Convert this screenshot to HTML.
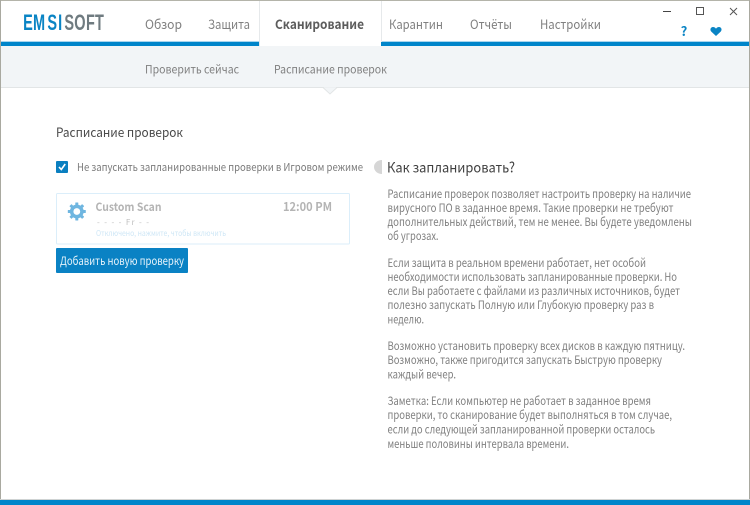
<!DOCTYPE html>
<html lang="ru">
<head>
<meta charset="utf-8">
<title>Emsisoft</title>
<style>
html,body{margin:0;padding:0;background:#fff;width:750px;height:505px;overflow:hidden}
svg{display:block}
text{font-family:"Noto Sans CJK SC","Liberation Sans",sans-serif;filter:blur(.35px)}
.b text{font-size:11.6px;fill:#808080}
</style>
</head>
<body>
<svg width="750" height="505" viewBox="0 0 750 505" xmlns="http://www.w3.org/2000/svg">
<rect width="750" height="505" fill="#fff"/>
<!-- window border -->
<rect x="0" y="0" width="750" height="1" fill="#b4b4aa"/>
<rect x="0" y="0" width="1" height="500" fill="#a9a9a0"/>
<rect x="749" y="0" width="1" height="500" fill="#a9a9a0"/>
<!-- top bar -->
<rect x="1" y="41" width="258" height="1" fill="#a8d5ee"/>
<rect x="1" y="42" width="258" height="4" fill="#0085ca"/>
<rect x="381" y="41" width="368" height="1" fill="#a8d5ee"/>
<rect x="381" y="42" width="368" height="4" fill="#0085ca"/>
<rect x="259" y="1" width="1" height="45" fill="#e6e9eb"/>
<rect x="381" y="1" width="1" height="41" fill="#e6e9eb"/>
<!-- logo -->
<g transform="scale(.66 1)" font-size="22" font-weight="700">
<text y="30" x="35 50 71.700 88" fill="#0a84c4" style="font-family:'Liberation Sans',sans-serif">EMSI</text>
<text y="30" x="97.500 112.600 130.300 144" fill="#6f7b80" style="font-family:'Liberation Sans',sans-serif">SOFT</text>
</g>
<!-- nav -->
<g font-size="13" fill="#808080">
<text x="145" y="29" textLength="37" lengthAdjust="spacingAndGlyphs">Обзор</text>
<text x="208" y="29" textLength="42" lengthAdjust="spacingAndGlyphs">Защита</text>
<text x="275" y="29" textLength="89" lengthAdjust="spacingAndGlyphs" font-weight="700" fill="#5c5c5c">Сканирование</text>
<text x="389" y="29" textLength="54" lengthAdjust="spacingAndGlyphs">Карантин</text>
<text x="470" y="29" textLength="42" lengthAdjust="spacingAndGlyphs">Отчёты</text>
<text x="540" y="29" textLength="61" lengthAdjust="spacingAndGlyphs">Настройки</text>
</g>
<!-- window controls -->
<rect x="663" y="11" width="8" height="1" fill="#444"/>
<rect x="696.500" y="7.500" width="7" height="7" fill="none" stroke="#555" stroke-width="1"/>
<path d="M730 8L737 15M737 8L730 15" stroke="#555" stroke-width="1" fill="none"/>
<text x="684" y="36" font-size="13" font-weight="700" fill="#0a84c4" text-anchor="middle">?</text>
<path d="M716 36L711.300 31.600C709.600 29.800 710.600 27 713 27C714.400 27 715.400 27.700 716 28.700C716.600 27.700 717.600 27 719 27C721.400 27 722.400 29.800 720.700 31.600Z" fill="#0a84c4"/>
<!-- subnav -->
<rect x="1" y="46" width="748" height="41" fill="#f2f5f7"/>
<rect x="1" y="87" width="748" height="1" fill="#e2e5e6"/>
<path d="M323 87.500L330 94L337 87.500" fill="#f2f5f7" stroke="#e2e5e6" stroke-width="1"/>
<rect x="324" y="86" width="12" height="1.200" fill="#f2f5f7"/>
<g font-size="11.500" fill="#808080">
<text x="145" y="73.500" textLength="94" lengthAdjust="spacingAndGlyphs">Проверить сейчас</text>
<text x="274" y="73.500" textLength="113" lengthAdjust="spacingAndGlyphs">Расписание проверок</text>
</g>
<!-- left column -->
<text x="56" y="137" font-size="12.500" fill="#4a4a4a" textLength="127" lengthAdjust="spacingAndGlyphs">Расписание проверок</text>
<rect x="56" y="161" width="12" height="12" rx="1" fill="#0a7fc0"/>
<path d="M59 167L61.300 169.500L65.200 164" stroke="#fff" stroke-width="1.600" fill="none"/>
<text x="77" y="171" font-size="11" fill="#7b7b7b" textLength="286" lengthAdjust="spacingAndGlyphs">Не запускать запланированные проверки в Игровом режиме</text>
<path d="M382 160A8 7 0 0 0 382 174Z" fill="#d6d6d6"/>
<!-- card -->
<rect x="56.500" y="193.500" width="293" height="50.500" rx="1" fill="#fff" stroke="#dbeefa" stroke-width="1"/>
<g transform="translate(76.800 211.500)" fill="#6fb6e0">
<circle r="5.300" fill="none" stroke="#6fb6e0" stroke-width="3.200"/>
<rect x="-1.500" y="-9" width="3" height="18" rx=".4"/>
<rect x="-1.500" y="-9" width="3" height="18" rx=".4" transform="rotate(45)"/>
<rect x="-1.500" y="-9" width="3" height="18" rx=".4" transform="rotate(90)"/>
<rect x="-1.500" y="-9" width="3" height="18" rx=".4" transform="rotate(135)"/>
<circle r="3.400" fill="#fff"/>
</g>
<text x="95.500" y="211" font-size="11.500" font-weight="700" fill="#b4b4b4" textLength="66" lengthAdjust="spacingAndGlyphs">Custom Scan</text>
<text x="283" y="211" font-size="12" font-weight="700" fill="#b4b4b4" textLength="49" lengthAdjust="spacingAndGlyphs">12:00 PM</text>
<text x="97" y="225" font-size="8" fill="#c0c0c0" textLength="52" lengthAdjust="spacing" xml:space="preserve">- - - - Fr - -</text>
<text x="96" y="236" font-size="8" fill="#cfe7f6" textLength="130" lengthAdjust="spacingAndGlyphs">Отключено, нажмите, чтобы включить</text>
<!-- button -->
<rect x="56" y="248" width="132" height="25" rx="1" fill="#0a82c4"/>
<text x="60" y="265" font-size="11.500" fill="#e6f3fa" textLength="124" lengthAdjust="spacingAndGlyphs">Добавить новую проверку</text>
<!-- right column -->
<text x="387" y="172.500" font-size="14" fill="#404040" textLength="128" lengthAdjust="spacingAndGlyphs">Как запланировать?</text>
<g class="b">
<text x="387.500" y="198" textLength="303.500" lengthAdjust="spacingAndGlyphs">Расписание проверок позволяет настроить проверку на наличие</text>
<text x="387.500" y="212" textLength="286" lengthAdjust="spacingAndGlyphs">вирусного ПО в заданное время. Такие проверки не требуют</text>
<text x="387.500" y="226" textLength="304.500" lengthAdjust="spacingAndGlyphs">дополнительных действий, тем не менее. Вы будете уведомлены</text>
<text x="387.500" y="240" textLength="51" lengthAdjust="spacingAndGlyphs">об угрозах.</text>
<text x="387.500" y="267" textLength="258.500" lengthAdjust="spacingAndGlyphs">Если защита в реальном времени работает, нет особой</text>
<text x="387.500" y="281" textLength="289.500" lengthAdjust="spacingAndGlyphs">необходимости использовать запланированные проверки. Но</text>
<text x="387.500" y="295" textLength="292.500" lengthAdjust="spacingAndGlyphs">если Вы работаете с файлами из различных источников, будет</text>
<text x="387.500" y="309" textLength="266.500" lengthAdjust="spacingAndGlyphs">полезно запускать Полную или Глубокую проверку раз в</text>
<text x="387.500" y="323.500" textLength="36.500" lengthAdjust="spacingAndGlyphs">неделю.</text>
<text x="387.500" y="350" textLength="297.500" lengthAdjust="spacingAndGlyphs">Возможно установить проверку всех дисков в каждую пятницу.</text>
<text x="387.500" y="364" textLength="274.500" lengthAdjust="spacingAndGlyphs">Возможно, также пригодится запускать Быструю проверку</text>
<text x="387.500" y="378.500" textLength="68.500" lengthAdjust="spacingAndGlyphs">каждый вечер.</text>
<text x="387.500" y="405" textLength="263.500" lengthAdjust="spacingAndGlyphs">Заметка: Если компьютер не работает в заданное время</text>
<text x="387.500" y="419" textLength="284.500" lengthAdjust="spacingAndGlyphs">проверки, то сканирование будет выполняться в том случае,</text>
<text x="387.500" y="433.500" textLength="267.500" lengthAdjust="spacingAndGlyphs">если до следующей запланированной проверки осталось</text>
<text x="387.500" y="448" textLength="181.500" lengthAdjust="spacingAndGlyphs">меньше половины интервала времени.</text>
</g>
<!-- bottom bar -->
<rect x="0" y="499" width="750" height="1" fill="#cfd3d3"/>
<rect x="0" y="500" width="750" height="5" fill="#0085ca"/>
</svg>
</body>
</html>
